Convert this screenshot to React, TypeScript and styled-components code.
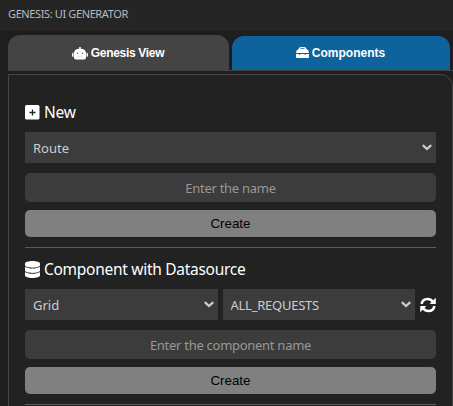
import React from "react";
import styled, { createGlobalStyle } from "styled-components";

const GlobalStyle = createGlobalStyle`
  * { box-sizing: border-box; }
  html, body { margin: 0; height: 100%; overflow: hidden; background: #1e1e1e; }
  body { font-family: "Noto Sans", "Open Sans", sans-serif; color: #fff; }
`;

const Shell = styled.div`
  width: 453px;
  height: 406px;
  overflow: hidden;
  display: flex;
  flex-direction: column;
`;

const TitleBar = styled.header`
  flex: none;
  height: 31px;
  padding: 0 8px;
  background: #252526;
  color: #bbb;
  font-size: 11px;
  line-height: 28px;
  letter-spacing: -0.38px;
  white-space: nowrap;
`;

const TabBar = styled.nav`
  flex: none;
  height: 36px;
  margin: 4px 0 3px 8px;
  display: grid;
  grid-template-columns: 221px 218px;
  column-gap: 3px;
  align-items: end;
  background: linear-gradient(#444, #444) left bottom / 100% 1px no-repeat;
`;

const Tab = styled.button<{ $active?: boolean }>`
  height: ${(p) => (p.$active ? 34 : 36)}px;
  margin: 0 0 ${(p) => (p.$active ? 1 : 0)}px;
  padding: 0 1px ${(p) => (p.$active ? 1 : 0)}px 0;
  border: 0;
  border-radius: 12px 12px 0 0;
  background: ${(p) => (p.$active ? "#0e639c" : "#444")};
  color: #fff;
  font: bold 12px "Liberation Sans", Arial, sans-serif;
  letter-spacing: ${(p) => (p.$active ? 0 : -0.3)}px;
  display: flex;
  align-items: center;
  justify-content: center;
  gap: 3px;
`;

const Panel = styled.main`
  flex: none;
  height: 360px;
  margin-left: 8px;
  padding: 24px 16px 0;
  border: 1px solid #444;
  border-radius: 0 12px 0 0;
  background: #222;
`;

const Section = styled.section`
  height: 157px;
  display: flex;
  flex-direction: column;
`;

const Heading = styled.h2`
  height: 27px;
  margin: 0 0 6px;
  display: flex;
  align-items: center;
  gap: 4px;
  font-size: 15.5px;
  font-weight: 400;
  line-height: 27px;
  letter-spacing: -0.28px;
  white-space: nowrap;
`;

const SelectRow = styled.div`
  display: flex;
  align-items: center;
  gap: 5px;
  margin-bottom: 10px;
`;

const SelectBox = styled.div`
  flex: 1;
  height: 31px;
  display: grid;
  align-items: center;
  background: #3c3c3c;
  > * { grid-area: 1 / 1; }
  > svg { justify-self: end; margin: 0 4px 0 0; pointer-events: none; }
`;

const NativeSelect = styled.select<{ $tracking: number }>`
  appearance: none;
  width: 100%;
  height: 31px;
  padding: 0 8px;
  border: 0;
  border-radius: 0;
  background: transparent;
  color: #ccc;
  font: 13px "Noto Sans", sans-serif;
  letter-spacing: ${(p) => p.$tracking}px;
`;

const TextInput = styled.input`
  width: 100%;
  height: 29px;
  margin: 0 0 8px;
  padding: 1px 8px 0;
  border: 0;
  border-radius: 5px;
  background: #3c3c3c;
  color: #ccc;
  text-align: center;
  font: 13px "Noto Sans", sans-serif;
  letter-spacing: -0.28px;
  &::placeholder { color: #989898; opacity: 1; }
`;

const CreateButton = styled.button`
  height: 27px;
  margin: 0 0 10px;
  padding: 0;
  border: 0;
  border-radius: 5px;
  background: #808080;
  color: #000;
  font: 13.33px "Liberation Sans", Arial, sans-serif;
`;

const Divider = styled.hr`
  width: 100%;
  height: 1px;
  margin: 0;
  border: 0;
  background: #5a5a5a;
`;

const RefreshButton = styled.button`
  width: 16px;
  height: 16px;
  padding: 0;
  border: 0;
  background: none;
  color: #fff;
  display: flex;
`;

const RobotIcon = () => (
  <svg width="16" height="13" viewBox="0 0 16 13" fill="currentColor">
    <path d="M7.200 0h1.600v1.800Q14 2 14 6.500v4a2 2 0 0 1-2 2H4a2 2 0 0 1-2-2v-4Q2 2 7.200 1.800zM1.500 5.500v4.500Q0 10 0 8.500V7q0-1.500 1.500-1.500zM14.500 5.500v4.500Q16 10 16 8.500V7q0-1.500-1.500-1.500z" />
    <g fill="#555">
      <circle cx="5.500" cy="6.200" r="0.700" />
      <circle cx="10.500" cy="6.200" r="0.700" />
    </g>
    <path d="M4.500 9.700h7" stroke="#ccc" strokeWidth="0.700" strokeDasharray="1.500 1" />
  </svg>
);

const ToolboxIcon = () => (
  <svg width="13" height="11" viewBox="0 0 13 11" fill="currentColor">
    <path
      fillRule="evenodd"
      d="M2.500 2Q3 0 5 0h3q2 0 2.500 2Q13 3 13 6H0q0-3 2.500-4zM4.500 1.200V2h4v-.8z"
    />
    <path d="M0 7h3v.8h1.300V7h4.400v.8H10V7h3v3q0 1-1 1H1q-1 0-1-1z" />
  </svg>
);

const PlusSquareIcon = () => (
  <svg width="15" height="15" viewBox="0 0 15 15">
    <rect width="14.500" height="14.500" rx="1.600" fill="#fff" />
    <path d="M7.500 4.500v6M4.500 7.500h6" stroke="#223" strokeWidth="1.300" />
  </svg>
);

const DatabaseIcon = () => (
  <svg width="15" height="17" viewBox="0 0 448 512" preserveAspectRatio="none" fill="currentColor">
    <path d="M448 73v55c0 40-100 73-224 73S0 168 0 128V73C0 33 100 0 224 0s224 33 224 73zM448 172v114c0 40-100 73-224 73S0 326 0 286V172c48 38 136 53 224 53s176-15 224-53zm0 158v109c0 40-100 73-224 73S0 479 0 439V330c48 38 136 53 224 53s176-15 224-53z" />
  </svg>
);

const RefreshIcon = () => (
  <svg width="16" height="16" viewBox="0 0 16 16" fill="none" stroke="currentColor" strokeWidth="2.500">
    <path d="M1.600 7Q2.400 2 7.600 2q3.200 0 5.200 2.700M14.400 9Q13.600 14 8.400 14q-3.200 0-5.200-2.700" />
    <path d="M15.800 .8v6.200H9.600zM.2 15.200V9h6.200z" fill="currentColor" stroke="none" />
  </svg>
);

function Select({ value, tracking = 0 }: { value: string; tracking?: number }) {
  return (
    <SelectBox>
      <NativeSelect $tracking={tracking} defaultValue={value}>
        <option>{value}</option>
      </NativeSelect>
      <svg width="10" height="7" viewBox="0 0 10 7" fill="none" stroke="#ccc" strokeWidth="2.300">
        <path d="M.8 1.200 5 5 9.200 1.200" />
      </svg>
    </SelectBox>
  );
}

export default function App() {
  return (
    <>
      <GlobalStyle />
      <Shell>
        <TitleBar>GENESIS: UI GENERATOR</TitleBar>
        <TabBar>
          <Tab>
            <RobotIcon />
            Genesis View
          </Tab>
          <Tab $active>
            <ToolboxIcon />
            Components
          </Tab>
        </TabBar>
        <Panel>
          <Section>
            <Heading>
              <PlusSquareIcon />
              New
            </Heading>
            <SelectRow>
              <Select value="Route" />
            </SelectRow>
            <TextInput placeholder="Enter the name" />
            <CreateButton>Create</CreateButton>
            <Divider />
          </Section>
          <Section>
            <Heading>
              <DatabaseIcon />
              Component with Datasource
            </Heading>
            <SelectRow>
              <Select value="Grid" />
              <Select value="ALL_REQUESTS" tracking={-0.25} />
              <RefreshButton aria-label="Refresh">
                <RefreshIcon />
              </RefreshButton>
            </SelectRow>
            <TextInput placeholder="Enter the component name" />
            <CreateButton>Create</CreateButton>
            <Divider />
          </Section>
        </Panel>
      </Shell>
    </>
  );
}
